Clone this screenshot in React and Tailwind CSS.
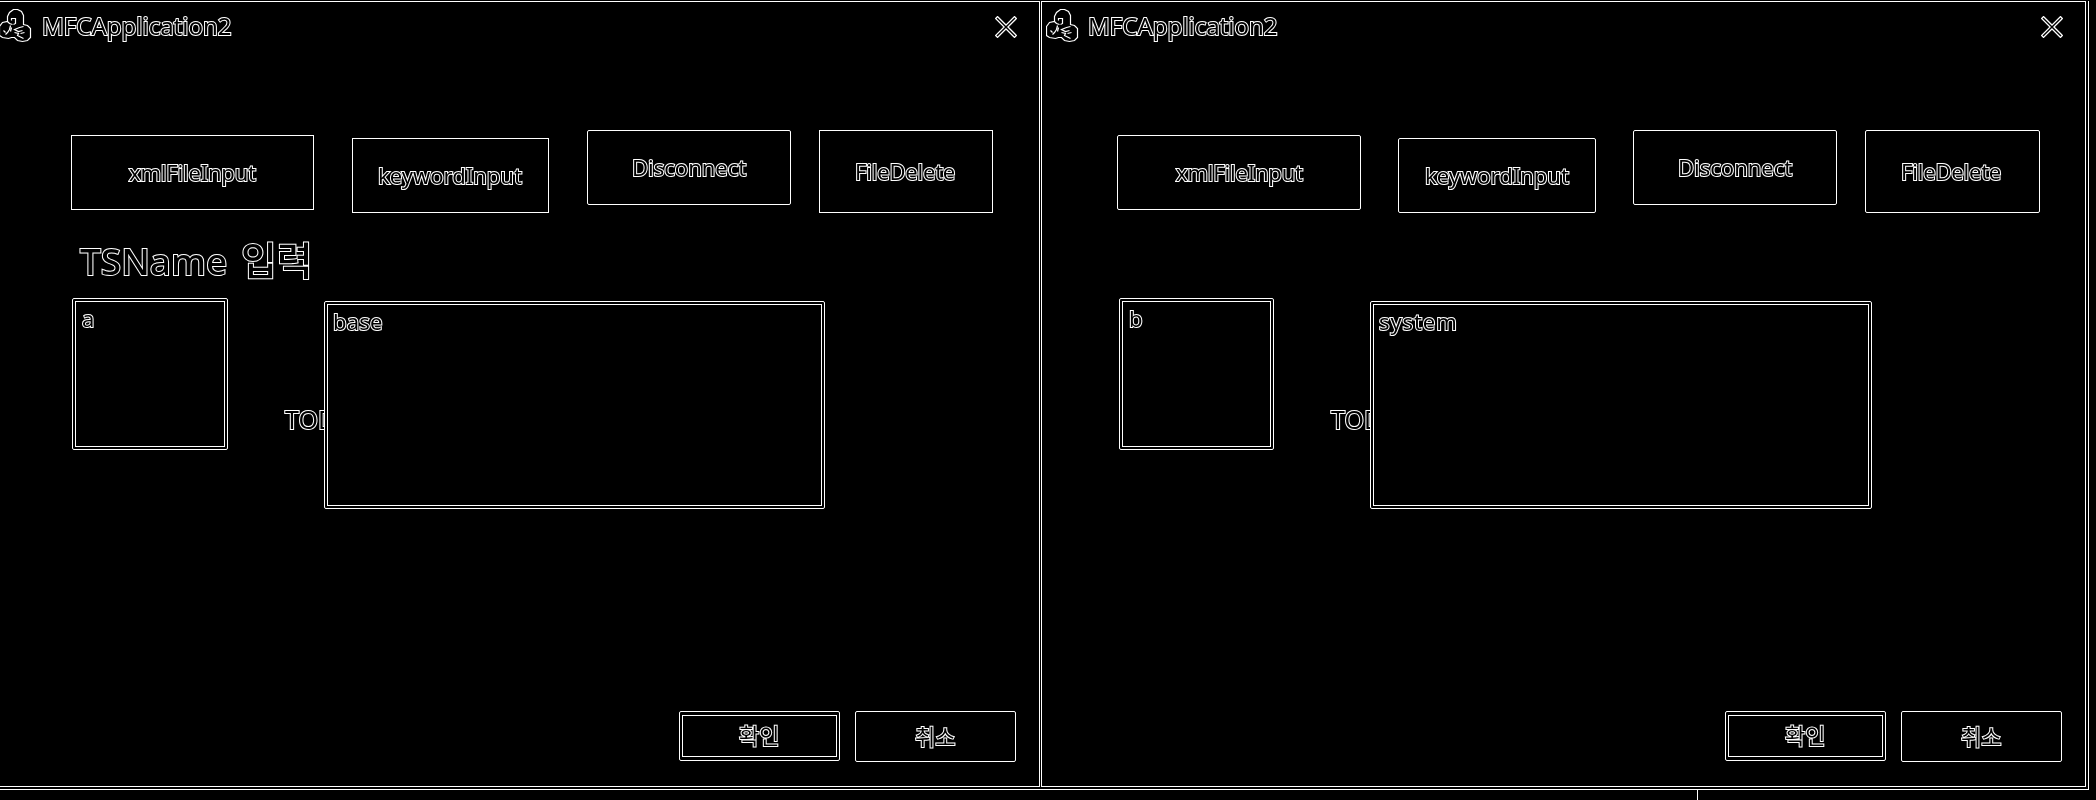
import React from "react";

const FONT = "font-['Noto_Sans','Noto_Sans_CJK_KR',sans-serif]";

const LEFT = {
  name: "a",
  kind: "base",
  heading: true,
  shell: "w-[1040px] border-r",
  icon: "-ml-px",
  buttons: ["w-[243px]", "ml-[38px] w-[197px]", "ml-[38px] w-[204px] rounded-[2px]", "ml-[28px] w-[174px]"],
  small: "ml-[72px] w-[156px]",
  todo: "ml-[55px] w-[41px]",
  large: "w-[501px]",
  kindText: "tracking-[0.2px]",
};

const RIGHT = {
  name: "b",
  kind: "system",
  heading: false,
  shell: "ml-px w-[1045px] border-x pl-[4px]",
  icon: "",
  buttons: ["w-[244px] rounded-[2px]", "ml-[37px] w-[198px] rounded-[2px]", "ml-[37px] w-[204px] rounded-[2px]", "ml-[28px] w-[175px] rounded-[2px]"],
  small: "ml-[73px] w-[155px]",
  todo: "ml-[55px] w-[41px]",
  large: "w-[502px]",
  kindText: "tracking-[0.9px]",
};

function Label({ className, children }) {
  return (
    <span className={`block whitespace-nowrap leading-none text-black will-change-transform [-webkit-text-stroke:2px_#fff] [paint-order:stroke_fill] ${className}`}>
      {children}
    </span>
  );
}

function AppIcon({ className }) {
  return (
    <svg width="33" height="34" viewBox="0 0 33 34" fill="none" stroke="#fff" strokeWidth="1.2" className={`shrink-0 ${className}`}>
      <path d="M8.5 12.5V7.5L10.5 3.5L14.5 .5H18.5L22.5 2.5L24.5 6.5V15.5L28.5 16.5L31.5 19.5V28.5L28.5 31.5L23.5 32.5L18.5 31.5L15.5 28.5H12.5L9.5 29.5L3.5 28.5L.5 26.5V17.5L3.5 13.5L8.5 12.5L10.5 14.5L13.5 15.5" />
      <path d="M12.5 11.5V9.5H16.5V14.5L14.5 15.5M11.5 16.5L10.5 20.5L8.5 23.5L6.5 25.5M4.5 21.5L6.5 23.5M12.5 18.5L11.5 22.5" />
      <path d="M24.5 17.5L20.5 18.5L15.5 20.5L19.5 22.5L23.5 21.5M15.5 23.5L19.5 24.5L18.5 26.5L22.5 28.5L24.5 29.5M21.5 24.5L25.5 23.5" />
    </svg>
  );
}

function CloseIcon() {
  return (
    <svg width="22" height="22" viewBox="0 0 22 22" fill="none" className="shrink-0">
      <path d="M2.5 2.5L19.5 19.5M19.5 2.5L2.5 19.5" stroke="#fff" strokeWidth="4" strokeLinecap="square" />
      <path d="M2.5 2.5L19.5 19.5M19.5 2.5L2.5 19.5" stroke="#000" strokeWidth="1.4" strokeLinecap="square" />
    </svg>
  );
}

function Dialog({ name, kind, heading, shell, icon, buttons, small, todo, large, kindText }) {
  return (
    <section className={`h-[786px] shrink-0 overflow-hidden border-y border-white ${shell}`}>
      <header className="flex h-[48px] items-start">
        <div className="flex w-[42px] shrink-0 pt-[7px]"><AppIcon className={icon} /></div>
        <Label className="w-[953px] pt-[12px] text-[24px]">MFCApplication2</Label>
        <div className="pt-[14px]"><CloseIcon /></div>
      </header>

      <div className="mt-[80px] ml-[71px] flex h-[83px] items-start">
        <button className={`mt-[5px] flex h-[75px] items-center justify-center border border-white pb-[2px] ${buttons[0]}`}>
          <Label className="text-[22px] tracking-[-0.2px]">xmlFileInput</Label>
        </button>
        <button className={`mt-[8px] flex h-[75px] items-center justify-center border border-white pr-px pb-[2px] ${buttons[1]}`}>
          <Label className="text-[22px]">keywordInput</Label>
        </button>
        <button className={`flex h-[75px] items-center justify-center border border-white pb-[2px] ${buttons[2]}`}>
          <Label className="text-[22px]">Disconnect</Label>
        </button>
        <button className={`flex h-[83px] items-center justify-center border border-white pr-[2px] pb-[2px] ${buttons[3]}`}>
          <Label className="text-[22px] tracking-[-0.2px]">FileDelete</Label>
        </button>
      </div>

      <div className="ml-[80px] h-[85px] pt-[27px]">
        {heading && (
          <Label className="text-[37px] font-medium">
            TSName <span className="ml-[4px] text-[39px]">입력</span>
          </Label>
        )}
      </div>

      <div className="flex h-[211px] items-start">
        <div className={`h-[152px] rounded-[2px] border border-white p-[2px] ${small}`}>
          <div className="h-full border border-white pt-[5px] pl-[6px]">
            <Label className="text-[22px]">{name}</Label>
          </div>
        </div>
        <div className={`mt-[109px] overflow-hidden pl-[2px] ${todo}`}>
          <Label className="text-[25px]">TOD</Label>
        </div>
        <div className={`mt-[3px] h-[208px] rounded-[2px] border border-white p-[2px] ${large}`}>
          <div className="h-full border border-white pt-[5px] pl-[5px]">
            <Label className={`text-[22px] ${kindText}`}>{kind}</Label>
          </div>
        </div>
      </div>

      <footer className="mt-[202px] ml-[679px] flex items-start">
        <button className="h-[50px] w-[161px] rounded-[2px] border border-white px-[2px] py-[3px]">
          <span className="flex h-full items-center justify-center border border-white pb-[2px]">
            <Label className="text-[22px]">확인</Label>
          </span>
        </button>
        <button className="ml-[15px] flex h-[51px] w-[161px] items-center justify-center rounded-[2px] border border-white pb-[2px]">
          <Label className="text-[22px]">취소</Label>
        </button>
      </footer>
    </section>
  );
}

export default function App() {
  return (
    <main className={`h-[800px] w-[2096px] overflow-hidden bg-black pt-px ${FONT}`}>
      <div className="flex h-[789px] w-[2089px] border-r border-b border-white">
        <Dialog {...LEFT} />
        <Dialog {...RIGHT} />
      </div>
      <div className="ml-[1697px] h-[10px] w-px bg-white" />
    </main>
  );
}
